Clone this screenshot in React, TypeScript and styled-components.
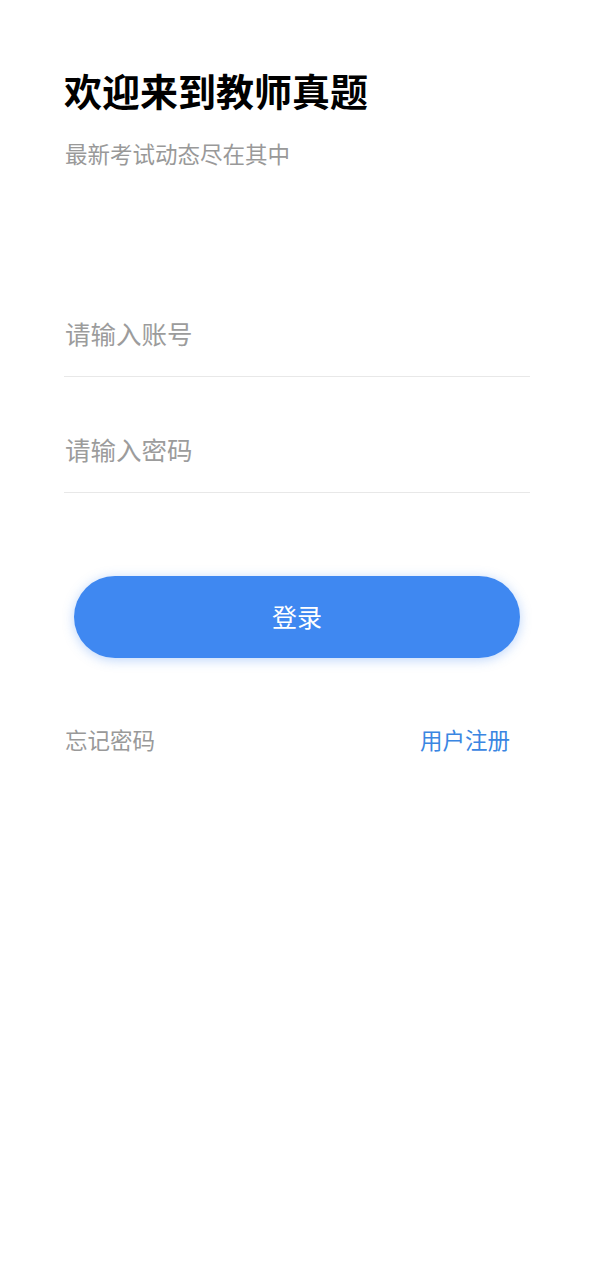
import React from "react";
import styled, { createGlobalStyle } from "styled-components";

const Global = createGlobalStyle`
  html, body { margin: 0; padding: 0; background: #ffffff; }
  body { font-family: "Noto Sans CJK SC", "Noto Sans", sans-serif; }
  * { box-sizing: border-box; }
`;

const Page = styled.div`
  min-height: 1280px;
  padding: 66px 64px 0 64px;
  display: flex;
  flex-direction: column;
`;

const Title = styled.h1`
  margin: 0;
  font-size: 38px;
  line-height: 48px;
  font-weight: 700;
  color: #000;
`;

const Subtitle = styled.p`
  margin: 24px 0 0 1px;
  font-size: 22.5px;
  line-height: 30px;
  color: #999;
`;

const Form = styled.div`
  margin-top: 93px;
  display: flex;
  flex-direction: column;
`;

const Field = styled.div`
  height: 116px;
  display: flex;
  align-items: flex-start;
  border-bottom: 1px solid #e8e8e8;
  padding-top: 55px;
`;

const Input = styled.input`
  border: none;
  outline: none;
  width: 100%;
  height: 34px;
  padding: 0 0 0 1px;
  font-family: "Noto Sans CJK SC", "Noto Sans", sans-serif;
  font-size: 25.5px;
  line-height: 34px;
  color: #333;
  background: transparent;
  &::placeholder { color: #9c9c9c; }
`;

const LoginButton = styled.button`
  margin: 83px 10px 0 10px;
  height: 82px;
  padding: 0 0 3px 0;
  border: none;
  border-radius: 41px;
  background: #3f88f1;
  color: #fff;
  font-family: "Noto Sans CJK SC", "Noto Sans", sans-serif;
  font-size: 25px;
  box-shadow: 0 2px 12px rgba(63, 136, 241, 0.35);
`;

const Links = styled.div`
  margin-top: 65px;
  display: flex;
  justify-content: space-between;
  padding: 0 20px 0 1px;
`;

const Link = styled.span<{ $primary?: boolean }>`
  font-size: 22.5px;
  line-height: 32px;
  color: ${(p) => (p.$primary ? "#3a86e2" : "#999")};
`;

export default function App() {
  return (
    <>
      <Global />
      <Page>
        <Title>欢迎来到教师真题</Title>
        <Subtitle>最新考试动态尽在其中</Subtitle>
        <Form>
          <Field>
            <Input placeholder="请输入账号" />
          </Field>
          <Field>
            <Input type="password" placeholder="请输入密码" />
          </Field>
        </Form>
        <LoginButton>登录</LoginButton>
        <Links>
          <Link>忘记密码</Link>
          <Link $primary>用户注册</Link>
        </Links>
      </Page>
    </>
  );
}
